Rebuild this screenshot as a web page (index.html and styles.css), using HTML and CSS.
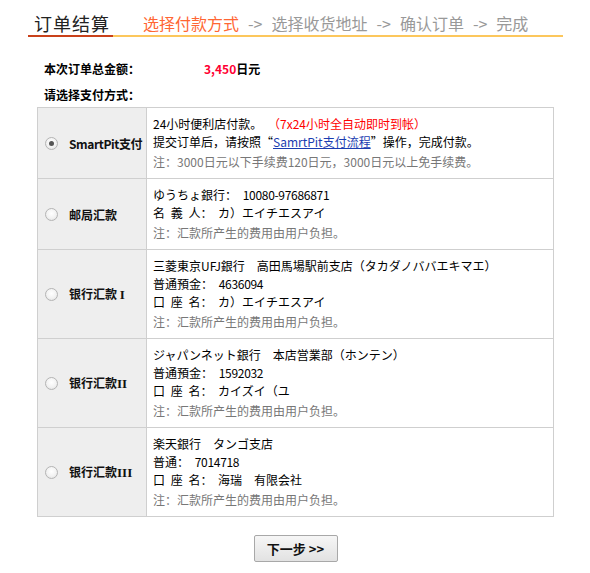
FILE: index.html
```html
<!DOCTYPE html>
<html lang="zh-CN">
<head>
<meta charset="utf-8">
<title>订单结算</title>
<link rel="stylesheet" href="styles.css">
</head>
<body>
<div class="page">
  <div class="head">
    <div class="head-title">订单结算</div>
    <div class="head-steps">
      <span class="step current">选择付款方式</span><span class="arrow">-&gt;</span><span class="step">选择收货地址</span><span class="arrow">-&gt;</span><span class="step">确认订单</span><span class="arrow">-&gt;</span><span class="step">完成</span>
    </div>
  </div>

  <div class="summary">
    <div class="sum-row">
      <span class="sum-label">本次订单总金额：</span><span class="sum-value"><span class="price">3,450</span>日元</span>
    </div>
    <div class="sum-row">
      <span class="sum-label">请选择支付方式：</span>
    </div>
  </div>

  <table class="pay">
    <tr>
      <td class="opt"><label class="opt-label"><input type="radio" name="pay" class="radio" checked><span class="opt-name en">SmartPit支付</span></label></td>
      <td class="info">
        <div class="line">24小时便利店付款。 <span class="red">（7x24小时全自动即时到帐）</span></div>
        <div class="line">提交订单后，请按照“<a href="#" class="link">SamrtPit支付流程</a>”操作，完成付款。</div>
        <div class="note">注：3000日元以下手续费120日元，3000日元以上免手续费。</div>
      </td>
    </tr>
    <tr>
      <td class="opt"><label class="opt-label"><input type="radio" name="pay" class="radio"><span class="opt-name">邮局汇款</span></label></td>
      <td class="info">
        <div class="line">ゆうちょ銀行： <span class="num">10080-97686871</span></div>
        <div class="line">名 義 人： カ）エイチエスアイ</div>
        <div class="note">注：汇款所产生的费用由用户负担。</div>
      </td>
    </tr>
    <tr>
      <td class="opt"><label class="opt-label"><input type="radio" name="pay" class="radio"><span class="opt-name">银行汇款 <span class="roman">I</span></span></label></td>
      <td class="info">
        <div class="line">三菱東京UFJ銀行　高田馬場駅前支店（タカダノババエキマエ）</div>
        <div class="line">普通預金： <span class="num">4636094</span></div>
        <div class="line">口 座 名： カ）エイチエスアイ</div>
        <div class="note">注：汇款所产生的费用由用户负担。</div>
      </td>
    </tr>
    <tr>
      <td class="opt"><label class="opt-label"><input type="radio" name="pay" class="radio"><span class="opt-name">银行汇款<span class="roman">II</span></span></label></td>
      <td class="info">
        <div class="line">ジャパンネット銀行　本店営業部（ホンテン）</div>
        <div class="line">普通預金： <span class="num">1592032</span></div>
        <div class="line">口 座 名： カイズイ（ユ</div>
        <div class="note">注：汇款所产生的费用由用户负担。</div>
      </td>
    </tr>
    <tr>
      <td class="opt"><label class="opt-label"><input type="radio" name="pay" class="radio"><span class="opt-name">银行汇款<span class="roman">III</span></span></label></td>
      <td class="info">
        <div class="line">楽天銀行　タンゴ支店</div>
        <div class="line">普通： <span class="num">7014718</span></div>
        <div class="line">口 座 名： 海瑞　有限会社</div>
        <div class="note">注：汇款所产生的费用由用户负担。</div>
      </td>
    </tr>
  </table>

  <div class="actions">
    <button type="button" class="next">下一步 &gt;&gt;</button>
  </div>
</div>
</body>
</html>
```

FILE: styles.css
```css
* { box-sizing: border-box; }

body {
  margin: 0;
  background: #fff;
  font-family: "Noto Sans CJK SC", "Noto Sans", sans-serif;
  font-size: 12px;
  color: #000;
}

.page {
  width: 590px;
  padding: 0 0 0 28px;
}

.head {
  display: flex;
  width: 535px;
  padding-top: 11px;
}

.head-title {
  width: 85px;
  padding-left: 6px;
  font-size: 18px;
  line-height: 24px;
  letter-spacing: 1px;
  color: #222;
  border-bottom: 2px solid #c9411a;
}

.head-steps {
  flex: 1;
  padding-left: 30px;
  font-size: 16px;
  line-height: 24px;
  color: #999;
  border-bottom: 2px solid #fcc75c;
  white-space: nowrap;
}

.step.current { color: #ff6633; }

.arrow {
  padding: 0 9px;
}

.summary {
  padding: 18px 0 0 16px;
}

.sum-row {
  display: flex;
  height: 26px;
  align-items: center;
  font-weight: bold;
}

.sum-label {
  width: 160px;
}

.price { color: #ff0033; }

.pay {
  margin-left: 9px;
  width: 517px;
  border-collapse: collapse;
  border: 1px solid #cfcfcf;
}

.pay td {
  border: 1px solid #cfcfcf;
  vertical-align: middle;
}

.opt {
  width: 109px;
  background: #eeeeee;
  padding: 0 0 0 7px;
}

.opt-label {
  display: flex;
  align-items: center;
}

.radio {
  appearance: none;
  -webkit-appearance: none;
  width: 13px;
  height: 13px;
  margin: 0 11px 0 0;
  border: 1px solid #b4b4b4;
  border-radius: 50%;
  background: radial-gradient(circle at 50% 40%, #ffffff 0%, #f2f2f2 55%, #dcdcdc 100%);
  flex: none;
  position: relative;
}

.radio:checked::after {
  content: "";
  position: absolute;
  left: 3px;
  top: 3px;
  width: 5px;
  height: 5px;
  border-radius: 50%;
  background: #555;
}

.opt-name {
  font-weight: bold;
  font-size: 12px;
  color: #111;
  white-space: nowrap;
}

.opt-name.en { letter-spacing: -0.4px; }

.roman {
  font-family: "Liberation Serif", serif;
  font-size: 13px;
}

.info {
  padding: 7px 6px 7px 6px;
  line-height: 18px;
}

.line {
  height: 18px;
  white-space: nowrap;
  word-spacing: 3px;
}

.red { color: #ff0000; }

.link {
  color: #1a3cb0;
  text-decoration: underline;
}

.num { letter-spacing: -0.3px; }

.note {
  height: 18px;
  margin-top: 2px;
  color: #777;
  white-space: nowrap;
}

.actions {
  width: 517px;
  margin-left: 9px;
  padding-top: 18px;
  display: flex;
  justify-content: center;
}

.next {
  width: 84px;
  height: 27px;
  border: 1px solid #a8a8a8;
  border-radius: 2px;
  background: linear-gradient(#f6f6f6, #e2e2e2);
  font-family: "Noto Sans CJK SC", sans-serif;
  font-weight: bold;
  font-size: 13px;
  color: #111;
  padding: 0;
}
```
